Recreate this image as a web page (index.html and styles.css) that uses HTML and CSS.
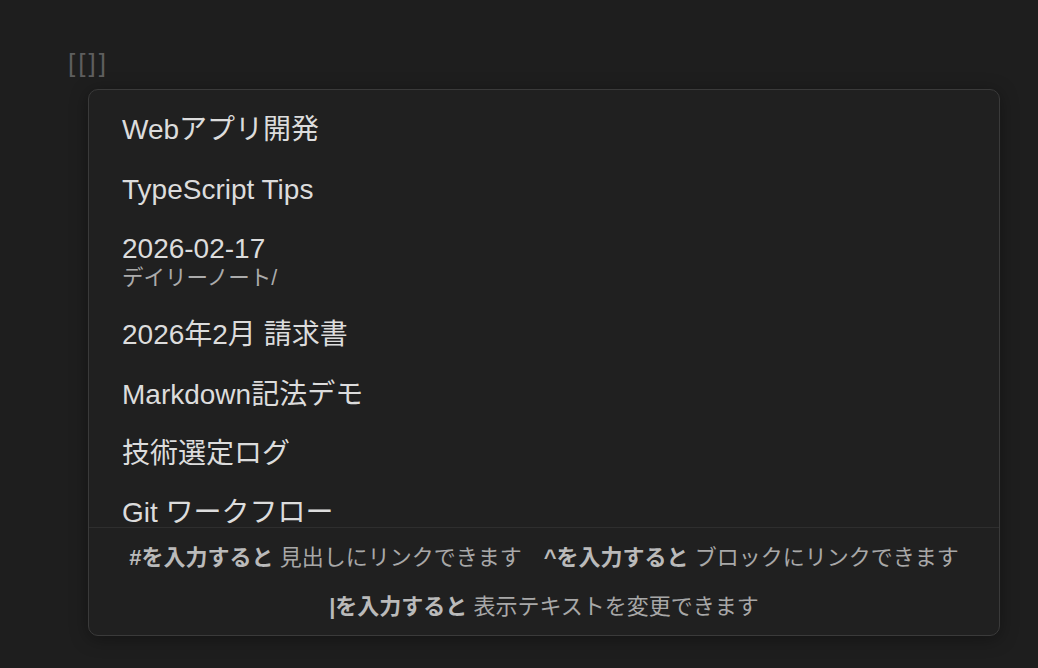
FILE: index.html
```html
<!DOCTYPE html>
<html lang="ja">
<head>
<meta charset="utf-8">
<title>Link suggest</title>
<link rel="stylesheet" href="styles.css">
</head>
<body>
<div class="editor">
  <div class="editor-line"><span class="formatting">[[]]</span></div>
  <div class="suggest">
    <div class="suggest-list">
      <div class="item"><div class="item-title">Webアプリ開発</div></div>
      <div class="item"><div class="item-title">TypeScript Tips</div></div>
      <div class="item"><div class="item-title">2026-02-17</div><div class="item-note">デイリーノート/</div></div>
      <div class="item"><div class="item-title">2026年2月 請求書</div></div>
      <div class="item"><div class="item-title">Markdown記法デモ</div></div>
      <div class="item"><div class="item-title">技術選定ログ</div></div>
      <div class="item"><div class="item-title">Git ワークフロー</div></div>
    </div>
    <div class="instructions">
      <div class="instruction"><span class="cmd">#を入力すると</span> 見出しにリンクできます</div>
      <div class="instruction"><span class="cmd">^を入力すると</span> ブロックにリンクできます</div>
      <div class="instruction"><span class="cmd">|を入力すると</span> 表示テキストを変更できます</div>
    </div>
  </div>
</div>
</body>
</html>
```

FILE: styles.css
```css
html, body {
  margin: 0;
  padding: 0;
  background: #1e1e1e;
}
body {
  width: 1038px;
  height: 668px;
  overflow: hidden;
  font-family: "Liberation Sans", "Noto Sans CJK JP", sans-serif;
  color: #dcdcdc;
}
.editor {
  padding-top: 45px;
}
.editor-line {
  padding-left: 68px;
  height: 36px;
  line-height: 36px;
  font-size: 26px;
}
.formatting {
  color: #5e5e5e;
  letter-spacing: 3px;
}
.suggest {
  margin: 8px 0 0 88px;
  width: 912px;
  box-sizing: border-box;
  border: 1px solid #3a3a3a;
  border-radius: 10px;
  background: #202020;
  box-shadow: 0 3px 18px rgba(0, 0, 0, 0.35);
  overflow: hidden;
}
.suggest-list {
  height: 437px;
  box-sizing: border-box;
  padding: 10.6px 8px 0 8px;
  overflow: hidden;
}
.item {
  padding: 13.65px 25px;
}
.item-title {
  font-size: 28px;
  line-height: 32px;
  color: #dcdcdc;
}
.item-note {
  font-size: 21.5px;
  line-height: 27.4px;
  color: #ababab;
}
.instructions {
  border-top: 1px solid #2e2e2e;
  padding: 13px 20px 12px;
  display: flex;
  flex-wrap: wrap;
  justify-content: center;
  column-gap: 22px;
  row-gap: 16px;
}
.instruction {
  font-size: 22px;
  line-height: 33px;
  color: #a8a8a8;
  white-space: nowrap;
}
.cmd {
  font-weight: bold;
  color: #bababa;
}
```
